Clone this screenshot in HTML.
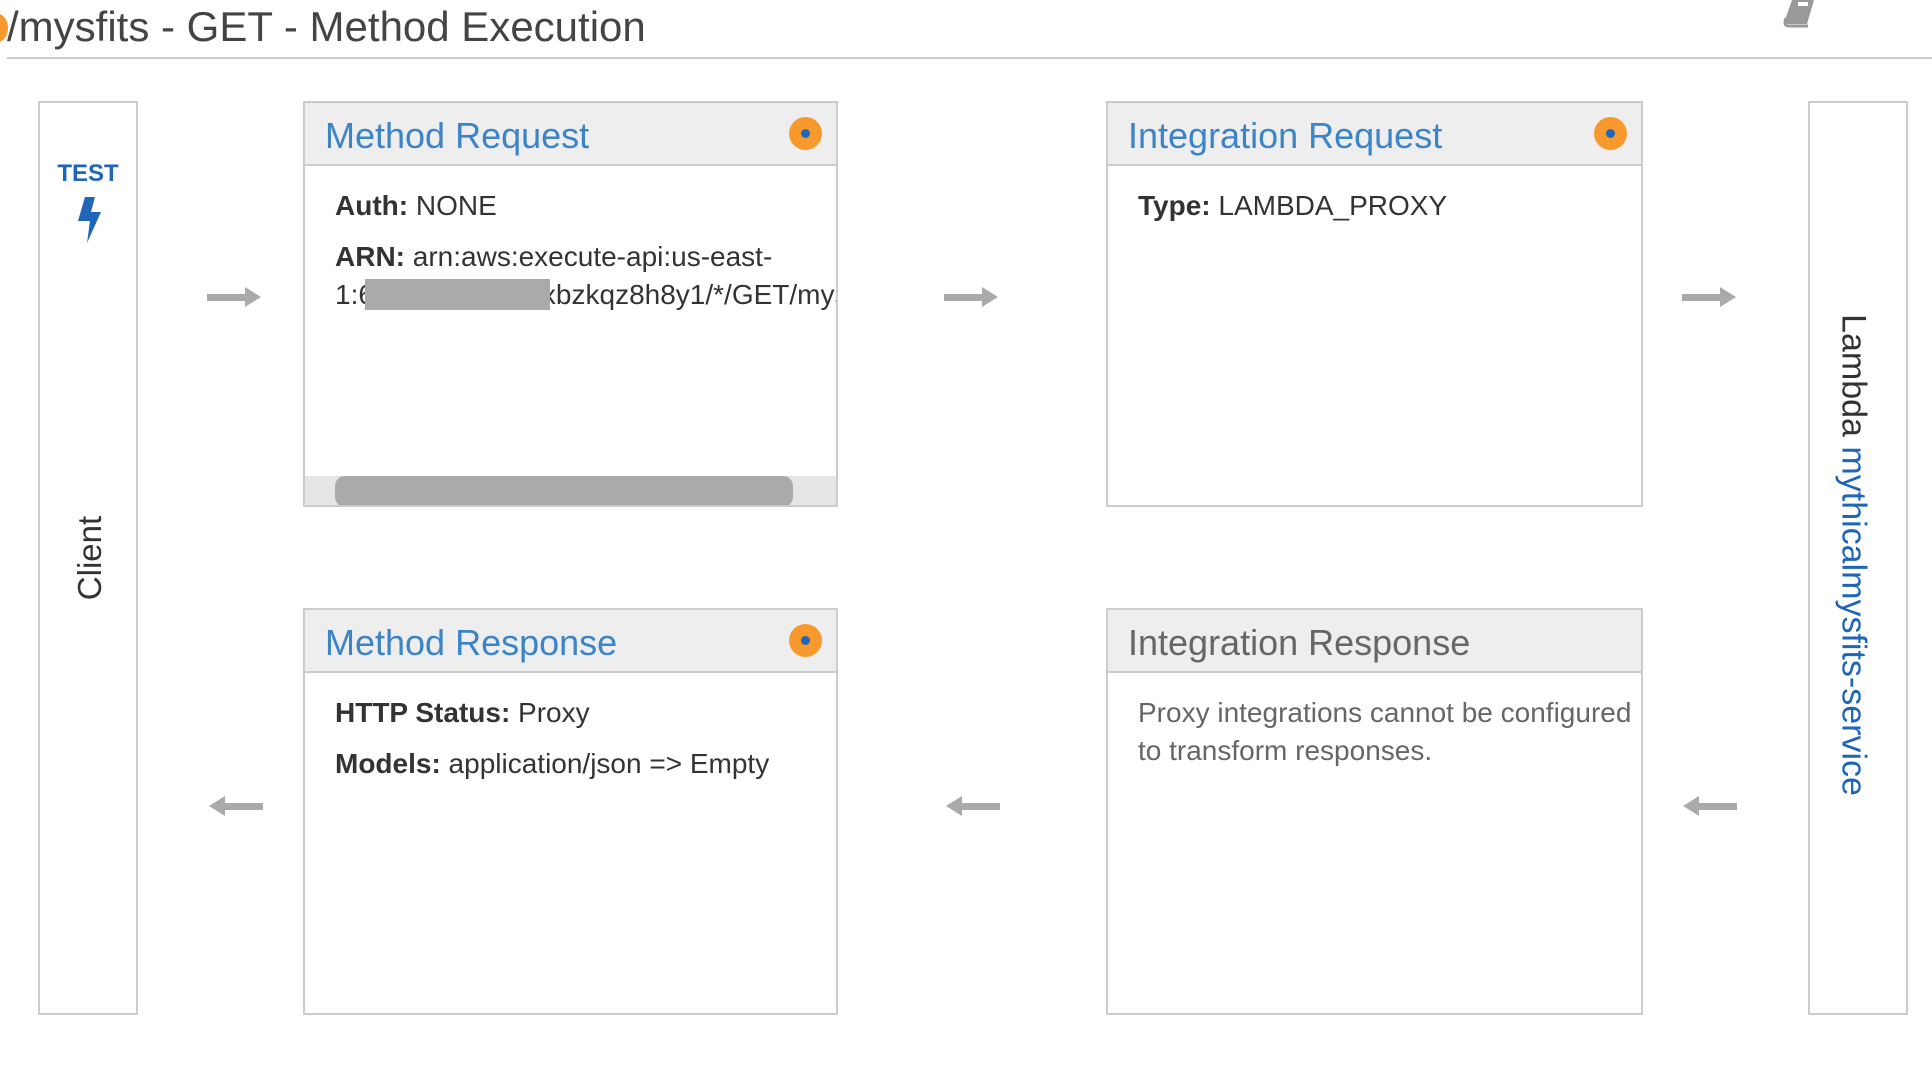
<!DOCTYPE html>
<html><head><meta charset="utf-8"><style>
*{margin:0;padding:0;box-sizing:border-box}
body{width:1932px;height:1086px;background:#fff;position:relative;overflow:hidden;font-family:"Liberation Sans",sans-serif;color:#333}
.abs{position:absolute}
.box{position:absolute;border:2px solid #ccc;background:#fff}
.hdr{position:absolute;left:0;right:0;top:0;height:63px;background:#eee;border-bottom:2px solid #ccc}
.hdr span{position:absolute;left:20px;top:12px;font-size:36px;color:#3b84c8}
.dot{position:absolute;right:14px;top:14px;width:33px;height:33px;border-radius:50%;background:#f7992d}
.dot:after{content:"";position:absolute;left:12px;top:12px;width:9px;height:9px;border-radius:50%;background:#1f65b8}
.body{position:absolute;left:30px;top:84px;font-size:28px;line-height:38px;white-space:nowrap}
.body p{margin-bottom:13px}
b{color:#333}
.arr{position:absolute;width:54px;height:20px}
</style></head><body>
<div class="abs" style="left:-12px;top:14px;width:20px;height:28px;border-radius:50%;background:#f7992d"></div>
<div class="abs" style="left:7px;top:1px;font-size:42px;color:#444;line-height:52px">/mysfits - GET - Method Execution</div>
<div class="abs" style="left:7px;top:57px;width:1925px;height:2px;background:#ccc"></div>
<svg class="abs" style="left:1782px;top:0" width="44" height="28" viewBox="0 0 44 28"><path d="M10 0 L32 0 L25 24 L6 24 Q2 24 3 20 Z" fill="#999"/><path d="M4 18 Q1 26 7 26 L26 26" stroke="#999" stroke-width="3" fill="none"/><rect x="16" y="2" width="10" height="4" fill="#fff"/></svg>

<div class="box" style="left:38px;top:101px;width:100px;height:914px"></div>
<div class="abs" style="left:38px;top:160px;width:100px;text-align:center;font-weight:bold;font-size:24px;color:#1f65b8">TEST</div>
<svg class="abs" style="left:75px;top:197px" width="28" height="46" viewBox="0 0 28 46"><path d="M10 0 L20 0 L16 15 L26 15 L12 46 L15 24 L3 24 Z" fill="#1f65b8"/></svg>
<div class="abs" style="left:90px;top:558px;transform:translate(-50%,-50%) rotate(-90deg);font-size:33px;color:#333;white-space:nowrap">Client</div>

<div class="box" style="left:303px;top:101px;width:535px;height:406px;overflow:hidden">
<div class="hdr"><span>Method Request</span><div class="dot"></div></div>
<div class="body"><p><b>Auth:</b> NONE</p><p><b>ARN:</b> arn:aws:execute-api:us-east-<br>1:6xxxxxxxxxxxxxbzkqz8h8y1/*/GET/mysfits</p></div>
<div class="abs" style="left:60px;top:176px;width:185px;height:31px;background:#aaa"></div>
<div class="abs" style="left:0;right:0;top:373px;height:31px;background:#e6e6e6"></div>
<div class="abs" style="left:30px;top:373px;width:458px;height:31px;border-radius:10px;background:#aaa"></div>
</div>

<div class="box" style="left:1106px;top:101px;width:537px;height:406px">
<div class="hdr"><span>Integration Request</span><div class="dot"></div></div>
<div class="body" style="left:30px"><p><b>Type:</b> LAMBDA_PROXY</p></div>
</div>

<div class="box" style="left:303px;top:608px;width:535px;height:407px">
<div class="hdr"><span>Method Response</span><div class="dot"></div></div>
<div class="body"><p><b>HTTP Status:</b> Proxy</p><p><b>Models:</b> application/json =&gt; Empty</p></div>
</div>

<div class="box" style="left:1106px;top:608px;width:537px;height:407px;overflow:hidden">
<div class="hdr"><span style="color:#666">Integration Response</span></div>
<div class="body" style="left:30px;color:#666;line-height:38px;top:84px">Proxy integrations cannot be configured<br>to transform responses.</div>
</div>

<div class="box" style="left:1808px;top:101px;width:100px;height:914px"></div>
<div class="abs" style="left:1853px;top:555px;transform:translate(-50%,-50%) rotate(90deg);font-size:34px;white-space:nowrap;color:#333">Lambda <span style="color:#1f65b8">mythicalmysfits-service</span></div>

<svg class="arr" style="left:207px;top:287px" viewBox="0 0 54 20"><rect x="0" y="7" width="40" height="7" fill="#aaa"/><path d="M38 0 L54 10 L38 20Z" fill="#aaa"/></svg>
<svg class="arr" style="left:944px;top:287px" viewBox="0 0 54 20"><rect x="0" y="7" width="40" height="7" fill="#aaa"/><path d="M38 0 L54 10 L38 20Z" fill="#aaa"/></svg>
<svg class="arr" style="left:1682px;top:287px" viewBox="0 0 54 20"><rect x="0" y="7" width="40" height="7" fill="#aaa"/><path d="M38 0 L54 10 L38 20Z" fill="#aaa"/></svg>
<svg class="arr" style="left:209px;top:796px" viewBox="0 0 54 20"><rect x="14" y="7" width="40" height="7" fill="#aaa"/><path d="M16 0 L0 10 L16 20Z" fill="#aaa"/></svg>
<svg class="arr" style="left:946px;top:796px" viewBox="0 0 54 20"><rect x="14" y="7" width="40" height="7" fill="#aaa"/><path d="M16 0 L0 10 L16 20Z" fill="#aaa"/></svg>
<svg class="arr" style="left:1683px;top:796px" viewBox="0 0 54 20"><rect x="14" y="7" width="40" height="7" fill="#aaa"/><path d="M16 0 L0 10 L16 20Z" fill="#aaa"/></svg>
</body></html>
